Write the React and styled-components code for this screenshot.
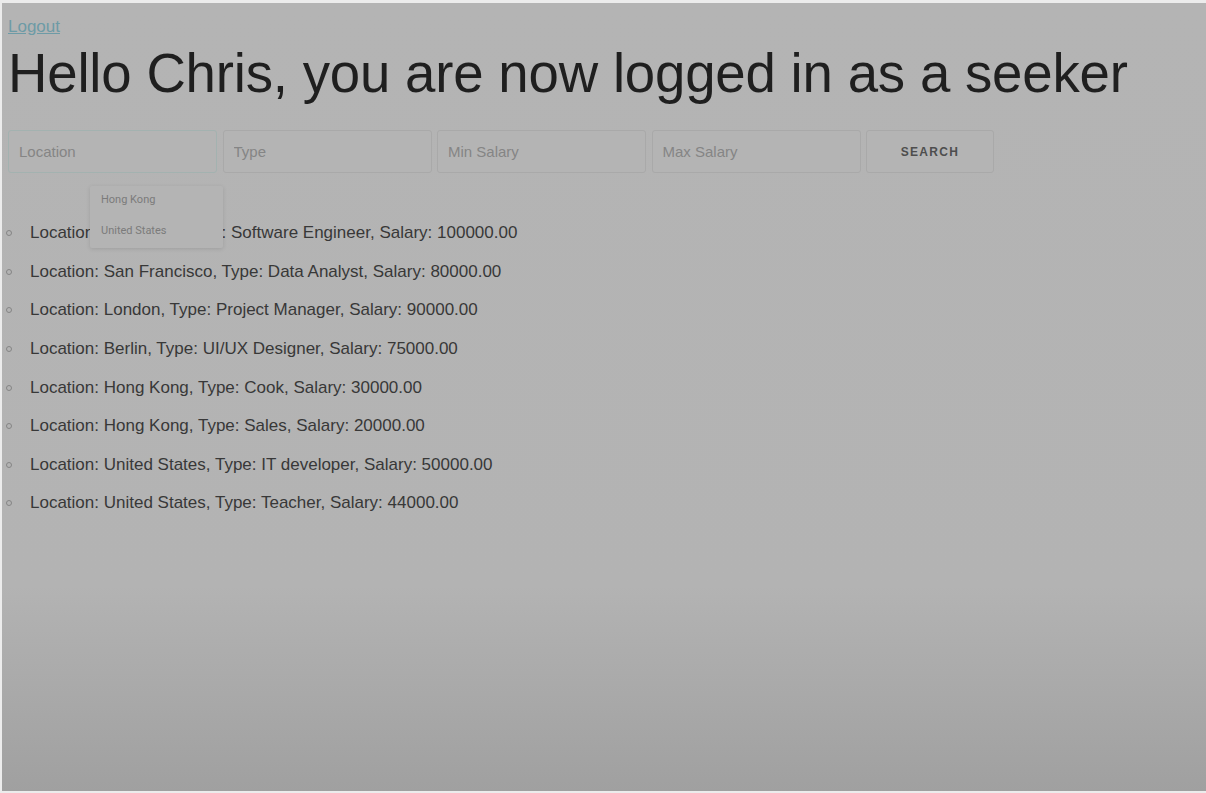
import React from 'react';
import styled, { createGlobalStyle } from 'styled-components';

const GlobalStyle = createGlobalStyle`
html, body {
    margin: 0;
    padding: 0;
    background: #ececec;
}
body {
    font-family: "Liberation Sans", Arial, sans-serif;
}
`;

const jobs = [
    { location: 'New York', type: 'Software Engineer', salary: '100000.00' },
    { location: 'San Francisco', type: 'Data Analyst', salary: '80000.00' },
    { location: 'London', type: 'Project Manager', salary: '90000.00' },
    { location: 'Berlin', type: 'UI/UX Designer', salary: '75000.00' },
    { location: 'Hong Kong', type: 'Cook', salary: '30000.00' },
    { location: 'Hong Kong', type: 'Sales', salary: '20000.00' },
    { location: 'United States', type: 'IT developer', salary: '50000.00' },
    { location: 'United States', type: 'Teacher', salary: '44000.00' },
];

const fields = ['Location', 'Type', 'Min Salary', 'Max Salary'];

const App = () => {
    return (
        <>
            <GlobalStyle />
            <Page>
                <LogoutLink href="#">Logout</LogoutLink>
                <Title>Hello Chris, you are now logged in as a seeker</Title>

                <SearchBar>
                    {fields.map((f, i) => (
                        <Field key={f} placeholder={f} $focused={i === 0} readOnly />
                    ))}
                    <SearchButton>SEARCH</SearchButton>

                    <Suggestions>
                        <Suggestion>Hong Kong</Suggestion>
                        <Suggestion>United States</Suggestion>
                    </Suggestions>
                </SearchBar>

                <JobList>
                    {jobs.map((job, i) => (
                        <JobItem key={i}>
                            <Bullet />
                            Location: {job.location}, Type: {job.type}, Salary: {job.salary}
                        </JobItem>
                    ))}
                </JobList>
            </Page>
        </>
    );
};

export default App;


const Page = styled.div`
margin: 3px 0 2px 2px;
min-height: 788px;
box-sizing: border-box;
padding: 14px 6px 0;
background: linear-gradient(to bottom, #b4b4b4 0%, #b3b3b3 74%, #a0a0a0 100%);
`;

const LogoutLink = styled.a`
display: inline-block;
font-size: 17px;
color: #6d9ba6;
text-decoration: underline;
line-height: 20px;
`;

const Title = styled.h1`
margin: 6px 0 0;
font-size: 54.6px;
font-weight: 400;
line-height: 62px;
color: #1f1f1f;
letter-spacing: -0.2px;
`;

const SearchBar = styled.div`
position: relative;
display: flex;
gap: 5.5px;
margin-top: 25px;
`;

const Field = styled.input`
width: 209px;
height: 43px;
box-sizing: border-box;
padding: 0 10px;
border: 1px solid ${p => (p.$focused ? '#a3b2b0' : '#a9a9a9')};
border-radius: 3px;
background: #b4b4b4;
font-family: "Liberation Sans", Arial, sans-serif;
font-size: 15px;
color: #4a4a4a;
outline: none;

&::placeholder {
    color: #858585;
}
`;

const SearchButton = styled.button`
width: 128px;
height: 43px;
border: 1px solid #a9a9a9;
border-radius: 3px;
background: #b4b4b4;
font-family: "Liberation Sans", Arial, sans-serif;
font-size: 12px;
font-weight: 700;
letter-spacing: 1.3px;
color: #4e4e4e;
`;

const Suggestions = styled.div`
position: absolute;
left: 82px;
top: 56px;
width: 133px;
padding: 6px 0 9px;
display: flex;
flex-direction: column;
gap: 15px;
background: #b4b4b4;
box-shadow: 0 1px 4px rgba(0, 0, 0, 0.12);
border-radius: 2px;
z-index: 2;
`;

const Suggestion = styled.div`
padding: 0 11px;
line-height: 16px;
font-family: Roboto, "Liberation Sans", sans-serif;
font-size: 11px;
color: #7b7b7b;
`;

const JobList = styled.ul`
list-style: none;
margin: 41px 0 0;
padding: 0;
`;

const JobItem = styled.li`
display: flex;
align-items: center;
height: 38.6px;
font-size: 17px;
color: #383838;
`;

const Bullet = styled.span`
width: 4px;
height: 4px;
border: 1px solid #858585;
border-radius: 50%;
margin: 0 18px 0 -2px;
`;
